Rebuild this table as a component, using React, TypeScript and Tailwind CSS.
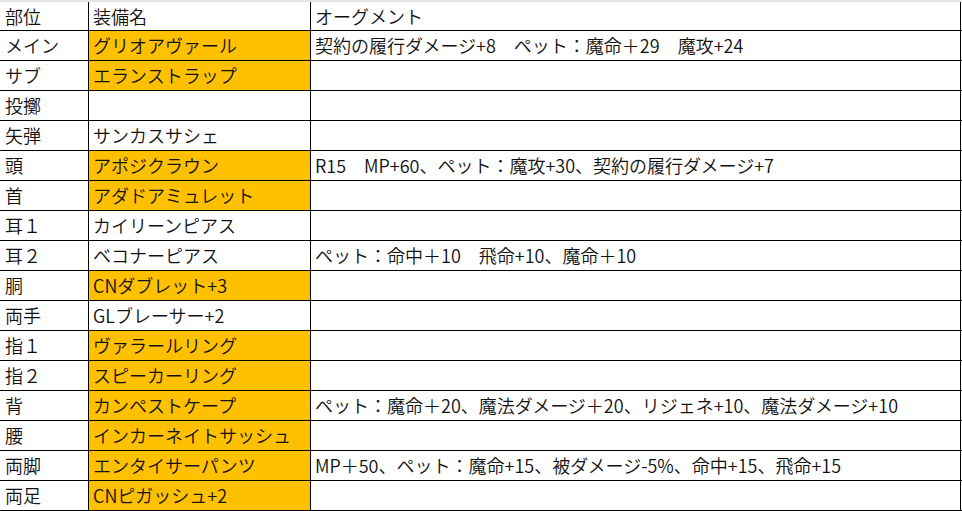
import React from "react";

type Row = { slot: string; item: string; aug: string; hit: boolean };

const rows: Row[] = [
  { slot: "メイン", item: "グリオアヴァール", aug: "契約の履行ダメージ+8　ペット：魔命＋29　魔攻+24", hit: true },
  { slot: "サブ", item: "エランストラップ", aug: "", hit: true },
  { slot: "投擲", item: "", aug: "", hit: false },
  { slot: "矢弾", item: "サンカスサシェ", aug: "", hit: false },
  { slot: "頭", item: "アポジクラウン", aug: "R15　MP+60、ペット：魔攻+30、契約の履行ダメージ+7", hit: true },
  { slot: "首", item: "アダドアミュレット", aug: "", hit: true },
  { slot: "耳１", item: "カイリーンピアス", aug: "", hit: false },
  { slot: "耳２", item: "ベコナーピアス", aug: "ペット：命中＋10　飛命+10、魔命＋10", hit: false },
  { slot: "胴", item: "CNダブレット+3", aug: "", hit: true },
  { slot: "両手", item: "GLブレーサー+2", aug: "", hit: false },
  { slot: "指１", item: "ヴァラールリング", aug: "", hit: true },
  { slot: "指２", item: "スピーカーリング", aug: "", hit: true },
  { slot: "背", item: "カンペストケープ", aug: "ペット：魔命＋20、魔法ダメージ＋20、リジェネ+10、魔法ダメージ+10", hit: true },
  { slot: "腰", item: "インカーネイトサッシュ", aug: "", hit: true },
  { slot: "両脚", item: "エンタイサーパンツ", aug: "MP＋50、ペット：魔命+15、被ダメージ-5%、命中+15、飛命+15", hit: true },
  { slot: "両足", item: "CNピガッシュ+2", aug: "", hit: true },
];

export default function App() {
  return (
    <div
      className="w-[962px] h-[511px] bg-white text-[18px] font-[350] text-[#111] overflow-hidden"
      style={{ fontFamily: '"Noto Sans CJK JP", "Noto Sans", sans-serif' }}
    >
      <div className="h-[2px] bg-[#e4e4e4]" />
      <div className="flex h-[29px] border-b border-black">
        <div className="w-[89px] border-r border-black pl-[5px] flex items-center">部位</div>
        <div className="w-[222px] border-r border-black pl-[4px] flex items-center">装備名</div>
        <div className="w-[650px] border-r border-black pl-[4px] flex items-center">オーグメント</div>
      </div>
      {rows.map((r) => (
        <div key={r.slot} className="flex h-[30px] border-b border-black">
          <div className="w-[89px] border-r border-black pl-[5px] flex items-center">{r.slot}</div>
          <div
            className={
              r.hit
                ? "w-[222px] border-r border-black pl-[4px] flex items-center bg-[#ffc000]"
                : "w-[222px] border-r border-black pl-[4px] flex items-center"
            }
          >
            {r.item}
          </div>
          <div className="w-[650px] border-r border-black pl-[4px] flex items-center whitespace-nowrap">
            {r.aug}
          </div>
        </div>
      ))}
    </div>
  );
}
